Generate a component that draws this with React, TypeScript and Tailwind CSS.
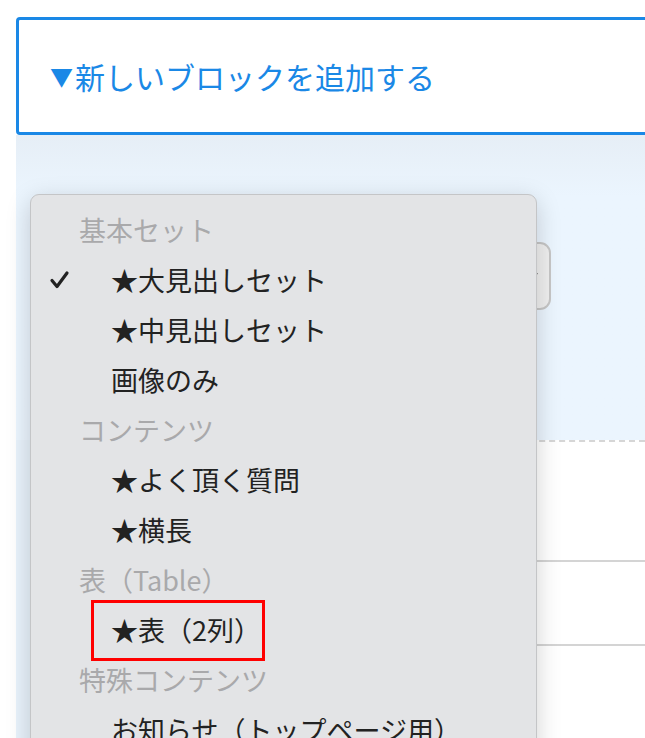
import React from "react";

type MenuRow = { label: string; kind: "group" | "item"; checked?: boolean; marked?: boolean };

const MENU_ROWS: MenuRow[] = [
  { label: "基本セット", kind: "group" },
  { label: "★大見出しセット", kind: "item", checked: true },
  { label: "★中見出しセット", kind: "item" },
  { label: "画像のみ", kind: "item" },
  { label: "コンテンツ", kind: "group" },
  { label: "★よく頂く質問", kind: "item" },
  { label: "★横長", kind: "item" },
  { label: "表（Table）", kind: "group" },
  { label: "★表（2列）", kind: "item", marked: true },
  { label: "特殊コンテンツ", kind: "group" },
  { label: "お知らせ（トップページ用）", kind: "item" },
];

const FONT = "font-['Noto_Sans_CJK_JP','Noto_Sans',sans-serif]";

function CheckMark() {
  return (
    <svg width="22" height="20" viewBox="0 0 22 20" className="absolute left-[18px] top-[15px]">
      <path d="M3 10.5 L8 16.5 L18 3" fill="none" stroke="#222" strokeWidth="3.2" strokeLinecap="round" strokeLinejoin="round" />
    </svg>
  );
}

function BlockMenu() {
  return (
    <div className="absolute left-[30px] top-[194px] w-[507px] h-[600px] rounded-[9px] border border-[#c4c5c7] bg-[#e3e4e6] pt-[10px] shadow-[0_6px_24px_rgba(0,0,0,0.18)]">
      {MENU_ROWS.map((row) => (
        <div
          key={row.label}
          className={
            row.kind === "group"
              ? "relative h-[50px] pl-[48px] text-[27px] leading-[50px] text-[#a9a9ab] whitespace-nowrap"
              : "relative h-[50px] pl-[80px] text-[27px] leading-[50px] text-[#222] whitespace-nowrap"
          }
        >
          {row.checked && <CheckMark />}
          {row.label}
          {row.marked && (
            <span className="absolute left-[60px] top-[-5px] h-[61px] w-[174px] border-[3px] border-[#ff0000]" />
          )}
        </div>
      ))}
    </div>
  );
}

export default function App() {
  return (
    <div className={`relative h-[738px] w-[645px] overflow-hidden bg-white ${FONT}`}>
      <div className="pl-[16px] pt-[17px]">
        <div className="flex h-[118px] w-[700px] items-center rounded-[4px] border-[3px] border-[#1a88e6] bg-white pl-[31px] text-[30px] text-[#1a88e6]">
          <span className="mr-[2px] text-[23px]">▼</span>
          新しいブロックを追加する
        </div>
        <div className="bg-[#e8f2fb]">
          <div className="h-[305px] bg-gradient-to-b from-[#e6eef6] to-[#ebf5fe] to-[20%] pt-[107px] pl-[24px]">
            <div className="flex h-[68px] w-[511px] items-center justify-end rounded-[11px] border-2 border-[#c6c6c6] bg-[#efefef] pr-[10px]">
              <svg width="10" height="10" viewBox="0 0 10 10">
                <path d="M1 9 L8 2" stroke="#111" strokeWidth="2" />
              </svg>
            </div>
          </div>
          <div className="ml-[24px] border-t-2 border-dashed border-[#d6d6d6] bg-white">
            <div className="h-[120px] border-b-2 border-[#d4d4d4]" />
            <div className="h-[84px] border-b-2 border-[#d4d4d4]" />
            <div className="h-[100px]" />
          </div>
        </div>
      </div>
      <BlockMenu />
    </div>
  );
}
